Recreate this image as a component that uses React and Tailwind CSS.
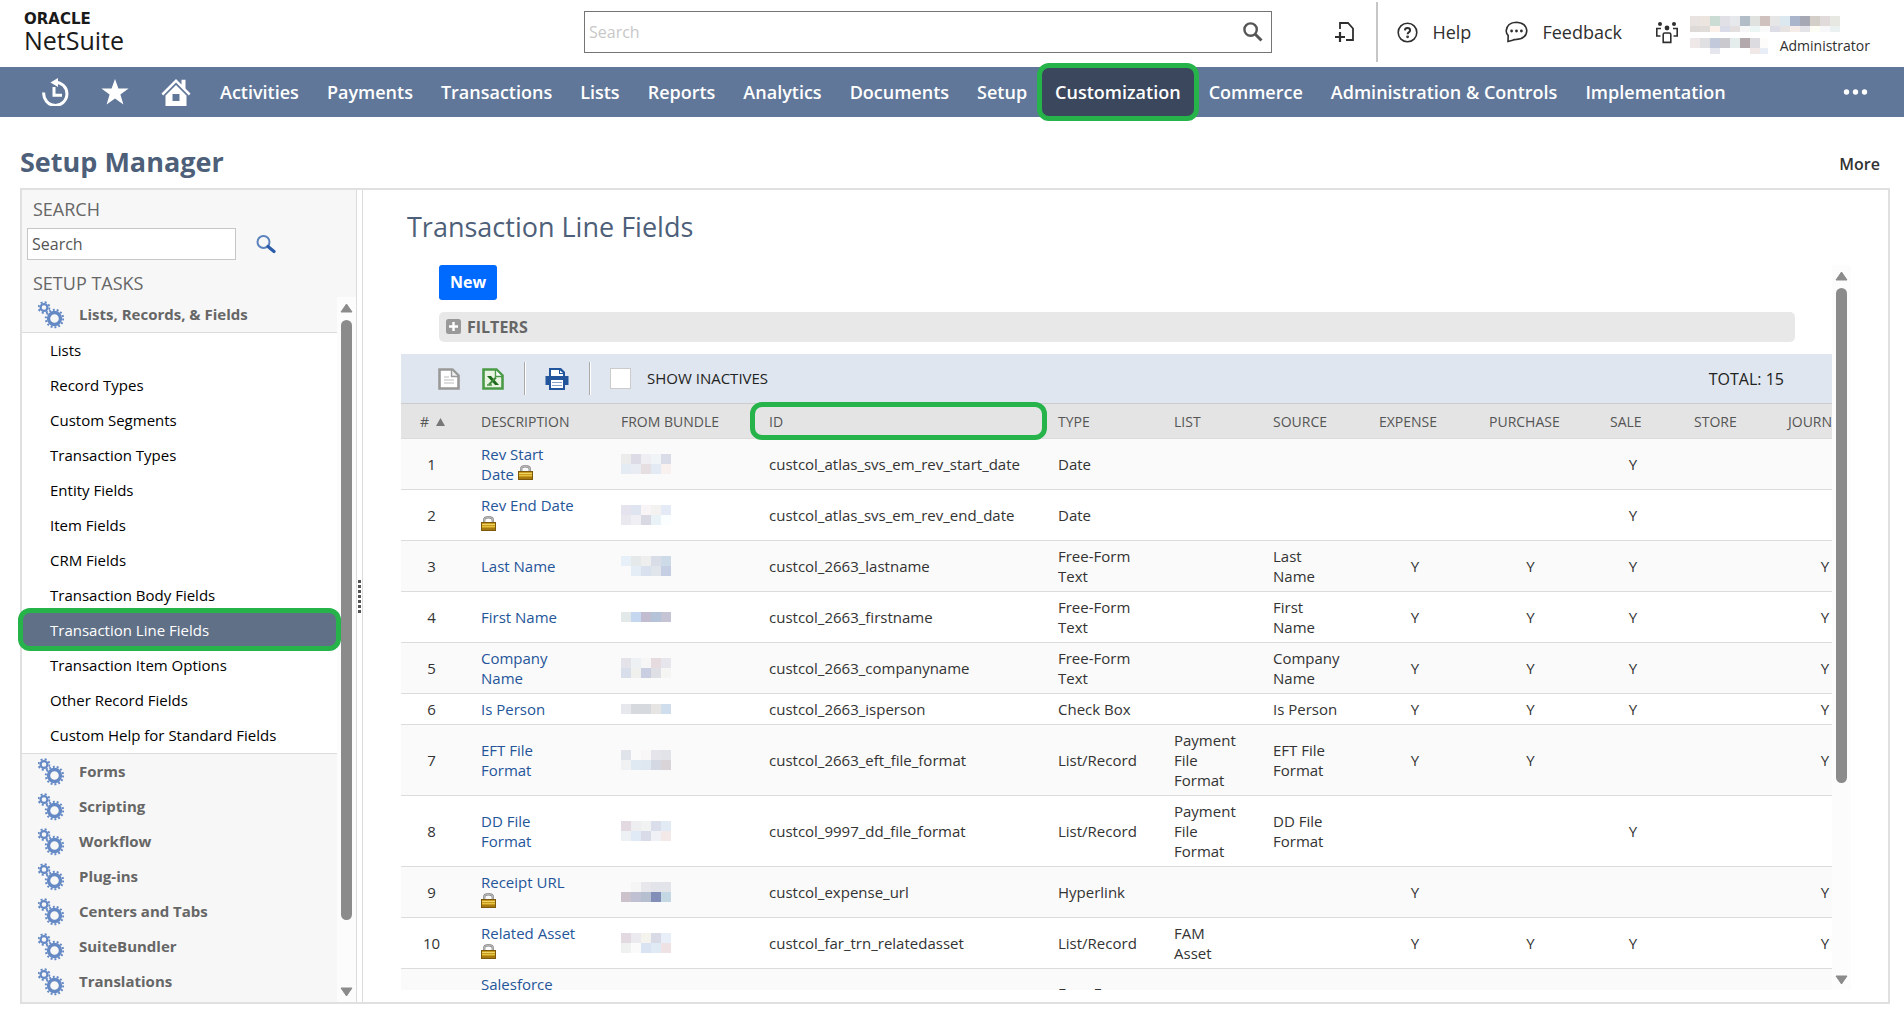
import React, { useState } from 'react';

const navItems = [
  'Activities',
  'Payments',
  'Transactions',
  'Lists',
  'Reports',
  'Analytics',
  'Documents',
  'Setup',
  'Customization',
  'Commerce',
  'Administration & Controls',
  'Implementation',
];

const taskLinks = [
  'Lists',
  'Record Types',
  'Custom Segments',
  'Transaction Types',
  'Entity Fields',
  'Item Fields',
  'CRM Fields',
  'Transaction Body Fields',
  'Transaction Line Fields',
  'Transaction Item Options',
  'Other Record Fields',
  'Custom Help for Standard Fields',
];

const taskGroups = [
  'Forms',
  'Scripting',
  'Workflow',
  'Plug-ins',
  'Centers and Tabs',
  'SuiteBundler',
  'Translations',
];

const rows = [
  {
    name: 'Rev Start Date', locked: true, id: 'custcol_atlas_svs_em_rev_start_date', type: 'Date', sale: 'Y',
    bundle: [['#ececec', '#dddbe6', '#eeeef3', '#f1f4f6', '#dadde8'], ['#e4ebf3', '#e9edf3', '#e6dfe1', '#e3eaf3', '#f9f0f0']],
  },
  {
    name: 'Rev End Date', locked: true, id: 'custcol_atlas_svs_em_rev_end_date', type: 'Date', sale: 'Y',
    bundle: [['#e5e4ee', '#dfe5f0', '#f9f5f6', '#f4f1f1', '#e4ebf6'], ['#e9e8ef', '#efeff4', '#d9d9e3', '#e9f3f7', '#fafefe']],
  },
  {
    name: 'Last Name', id: 'custcol_2663_lastname', type: 'Free-Form Text', source: 'Last Name', expense: 'Y', purchase: 'Y', sale: 'Y', journal: 'Y',
    bundle: [['#e7f0f9', '#e6e9e9', '#eeeeee', '#d9dde7', '#cddae8'], ['#fafafa', '#e4ecf6', '#d9e0ee', '#e0e5ec', '#c5cee2']],
  },
  {
    name: 'First Name', id: 'custcol_2663_firstname', type: 'Free-Form Text', source: 'First Name', expense: 'Y', purchase: 'Y', sale: 'Y', journal: 'Y',
    bundle: [['#e3e8e8', '#c5d7ee', '#c2bcd0', '#b5c3d9', '#c4c4d4']],
  },
  {
    name: 'Company Name', id: 'custcol_2663_companyname', type: 'Free-Form Text', source: 'Company Name', expense: 'Y', purchase: 'Y', sale: 'Y', journal: 'Y',
    bundle: [['#e4e3e9', '#edf1f4', '#f6f6f6', '#e6dcdf', '#e7e6ec'], ['#d8deea', '#f0f0ef', '#c9cfe1', '#dfdfe6', '#f5f5f4']],
  },
  {
    name: 'Is Person', id: 'custcol_2663_isperson', type: 'Check Box', source: 'Is Person', expense: 'Y', purchase: 'Y', sale: 'Y', journal: 'Y',
    bundle: [['#e6e8ee', '#d6d9de', '#d6d9de', '#e6e5e4', '#d0dded']],
  },
  {
    name: 'EFT File Format', id: 'custcol_2663_eft_file_format', type: 'List/Record', list: 'Payment File Format', source: 'EFT File Format', expense: 'Y', purchase: 'Y', journal: 'Y',
    bundle: [['#e1e3ea', '#fafafa', '#f9f6f7', '#e5e4ea', '#e2e3e9'], ['#eff1f3', '#dfe9f2', '#dfe8f1', '#d4d8e2', '#d8d4d8']],
  },
  {
    name: 'DD File Format', id: 'custcol_9997_dd_file_format', type: 'List/Record', list: 'Payment File Format', source: 'DD File Format', sale: 'Y',
    bundle: [['#e3dae1', '#eeedf0', '#f1f2f2', '#d9deea', '#e2eaf3'], ['#eef1f4', '#e0eaf7', '#d9dbe8', '#f0f1f6', '#f2e9e8']],
  },
  {
    name: 'Receipt URL', locked: true, id: 'custcol_expense_url', type: 'Hyperlink', expense: 'Y', journal: 'Y',
    bundle: [['#fafafa', '#f5f5f6', '#e7e7ec', '#e3e4ea', '#e3e4ea'], ['#ccc2cc', '#bfc1d3', '#b6bfd0', '#828db8', '#c3d8e3']],
  },
  {
    name: 'Related Asset', locked: true, id: 'custcol_far_trn_relatedasset', type: 'List/Record', list: 'FAM Asset', expense: 'Y', purchase: 'Y', sale: 'Y', journal: 'Y',
    bundle: [['#e3dae1', '#ebebef', '#f5f3ee', '#d8dae6', '#e8eff9'], ['#eff1f1', '#fafafa', '#d9e3f1', '#dfeaf5', '#efe2e4']],
  },
  { name: 'Salesforce', type: 'Free-Form Text', tall: true },
];

const accountName = [
  ['#e8e3e0', '#ece4df', '#cbdcd5', '#e0e0e6', '#e6e8ec', '#b3bdc8', '#dfe2de', '#cfc2be', '#e6e6e6', '#dbe8f0', '#aab4ca', '#a6a9b4', '#d3cfc8', '#e0dadb', '#e8e8e3'],
  ['#dddad8', '#dfdcda', '#fbf1ea', '#d9dce8', '#e3dfdf', '#f7f7f7', '#ebf6f5', '#fafafa', '#dcdde6', '#e6e3e2', '#f6ede9', '#e3e3e8', '#fefdf5', '#f8f8fb', '#eaf1f0'],
];

const accountRole = [
  ['#eee8e8', '#e0e0e2', '#c2c9db', '#c9c9ce', '#e5edec', '#b3a9ac', '#dcdce0', '#fdfcfb'],
  ['#ffffff', '#ffffff', '#e6e6ee', '#ffffff', '#ffffff', '#ffffff', '#efe8e6', '#e8edf6'],
];

// Redacted text, shown as coloured blocks
const Mosaic = ({ colors, cell = 10, lastRow = 10 }) => {
  const width = colors[0].length * cell;
  const height = (colors.length - 1) * cell + lastRow;

  return (
    <svg width={width} height={height} shapeRendering="crispEdges" aria-hidden="true" className="block">
      {colors.map((line, y) =>
        line.map((fill, x) => (
          <rect key={`${x}-${y}`} x={x * cell} y={y * cell} width={cell} height={cell} fill={fill} />
        ))
      )}
    </svg>
  );
};

const Gear = ({ cx, cy, r, teeth, ring, tooth }) => {
  const toothRadius = r + ring / 2 + tooth / 2;
  const step = (2 * Math.PI * toothRadius) / teeth;

  return (
    <g fill="none" stroke="#6489c5">
      <circle cx={cx} cy={cy} r={r} strokeWidth={ring} />
      <circle cx={cx} cy={cy} r={toothRadius} strokeWidth={tooth} strokeDasharray={`${step * 0.5} ${step * 0.5}`} />
    </g>
  );
};

const GearsIcon = () => (
  <svg width="26" height="28" viewBox="0 0 26 28" aria-hidden="true">
    <Gear cx={6} cy={6.5} r={3.4} teeth={8} ring={2.2} tooth={1.8} />
    <Gear cx={16.5} cy={17.5} r={6} teeth={14} ring={3.4} tooth={2} />
  </svg>
);

const LockIcon = () => (
  <svg width="15" height="15" viewBox="0 0 15 15" className="inline-block align-baseline" role="img" aria-label="Locked">
    <path d="M3.2 8V4.2Q3.2 1.2 7.5 1.2T11.8 4.2V8" fill="none" stroke="#8d8d8d" strokeWidth="2.4" />
    <path d="M3.2 7V4.2Q3.2 1.2 7.5 1.2T11.8 4.2V7" fill="none" stroke="#c9c9c9" strokeWidth="0.9" />
    <rect x="0.5" y="6.5" width="14" height="8" fill="#c89b1d" stroke="#7d5a0b" />
    <rect x="1" y="8" width="13" height="1" fill="#efd568" />
    <rect x="1" y="10" width="13" height="1" fill="#e6c443" />
    <rect x="1" y="12" width="13" height="2" fill="#a67a10" />
  </svg>
);

const ScrollBar = ({ thumb }) => (
  <div className="flex w-[19px] shrink-0 flex-col items-center bg-[#fcfcfc] pt-[6px] pb-[5px]">
    <svg width="13" height="10" viewBox="0 0 13 10" aria-hidden="true">
      <path d="M6.5 1L12 9H1Z" fill="#8b8b8b" stroke="#8b8b8b" strokeLinejoin="round" />
    </svg>
    <div className="mt-[7px] w-[11px] flex-1">
      <div className="w-full rounded-full bg-[#8b8b8b]" style={{ height: thumb }} />
    </div>
    <svg width="13" height="10" viewBox="0 0 13 10" aria-hidden="true">
      <path d="M6.5 9L12 1H1Z" fill="#8b8b8b" stroke="#8b8b8b" strokeLinejoin="round" />
    </svg>
  </div>
);

const Header = () => (
  <header className="flex h-[67px] items-start pr-[34px] pl-6 text-[#2f2f2f]">
    <div className="w-[560px] pt-[11px] text-[#1a1a1a]">
      <div className="font-['DejaVu_Sans',sans-serif] text-[15px] leading-[16px] font-bold">ORACLE</div>
      <div className="text-[25px] leading-[26px]">NetSuite</div>
    </div>

    <form className="mt-[11px] flex h-[42px] flex-1 items-center border border-[#757575]">
      <input
        type="text"
        aria-label="Global search"
        placeholder="Search"
        className="h-full min-w-0 flex-1 px-1 text-base outline-none placeholder:text-[#c8c8c8]"
      />
      <button type="button" aria-label="Search" className="px-2">
        <svg width="20" height="20" viewBox="0 0 20 20" fill="none" stroke="#555" strokeWidth="2.4" aria-hidden="true">
          <circle cx="7.6" cy="7.6" r="6.2" />
          <path d="M12 12L18.5 18.5" strokeWidth="3" />
        </svg>
      </button>
    </form>

    <button type="button" aria-label="Create new" className="mt-[21px] ml-[62px]">
      <svg width="22" height="22" viewBox="0 0 22 22" fill="none" stroke="#2f2f2f" strokeWidth="1.8" aria-hidden="true">
        <path d="M6 8V2H14L19 7.5V19H12" />
        <path d="M1 16H11M6 11V21" strokeWidth="2.2" />
      </svg>
    </button>
    <div className="mt-0.5 ml-[20px] h-[60px] w-0.5 bg-[#c6c6c6]" />

    <a href="#help" className="mt-[20px] ml-[19px] flex items-center gap-[14px] text-lg leading-6 font-medium">
      <svg width="21" height="21" viewBox="0 0 21 21" fill="none" stroke="#2f2f2f" strokeWidth="1.6" aria-hidden="true">
        <circle cx="10.5" cy="10.5" r="9.3" />
        <path d="M7.9 8.4Q8 6 10.5 6T13.1 8.2Q13.1 9.5 11.7 10.3Q10.6 11 10.6 12.2" strokeWidth="2" />
        <circle cx="10.6" cy="14.8" r="0.6" />
      </svg>
      Help
    </a>
    <a href="#feedback" className="mt-[20px] ml-[34px] flex items-center gap-[14px] text-lg leading-6 font-medium">
      <svg width="23" height="22" viewBox="0 0 23 22" fill="none" stroke="#2f2f2f" strokeWidth="1.6" aria-hidden="true">
        <path d="M3.2 14.5Q1 12 1.2 9.6Q2 1.6 11.5 1.2Q21 1.6 21.8 9.8Q21 18 11.5 18.4Q9 18.4 7.5 19.2L3 20.5Z" />
        <g fill="#2f2f2f" stroke="none">
          <circle cx="6.6" cy="10" r="1.4" />
          <circle cx="11.5" cy="10" r="1.4" />
          <circle cx="16.4" cy="10" r="1.4" />
        </g>
      </svg>
      Feedback
    </a>

    <button type="button" aria-label="Change role" className="mt-[21px] ml-[33px]">
      <svg width="24" height="23" viewBox="0 0 24 23" fill="none" stroke="#2f2f2f" strokeWidth="1.6" aria-hidden="true">
        <path d="M8.2 13.5Q8.2 12 9.7 12H14.3Q15.8 12 15.8 13.5V21.4H8.2Z" />
        <path d="M6 7.5H1.8V15H5.5M18 7.5H22.2V15H18.5" />
        <g fill="#2f2f2f" stroke="none">
          <circle cx="12" cy="7" r="2.4" />
          <circle cx="5" cy="3" r="2" />
          <circle cx="19" cy="3" r="2" />
        </g>
      </svg>
    </button>
    <div className="mt-[16px] ml-[11px] w-[180px]">
      <Mosaic colors={accountName} lastRow={6} />
      <div className="mt-1 flex items-center gap-3">
        <Mosaic colors={accountRole} lastRow={6} />
        <span className="text-sm leading-5">Administrator</span>
      </div>
    </div>
  </header>
);

const NavBar = () => (
  <nav className="flex h-[50px] items-center bg-[#607799] pr-9 pl-[42px] text-lg font-semibold text-white">
    <div className="flex items-center gap-8 pr-[15px]">
      <button type="button" aria-label="Recent records">
        <svg width="27" height="28" viewBox="0 0 27 28" fill="none" stroke="white" strokeWidth="3" aria-hidden="true">
          <path d="M1.8 14.5A11.6 11.6 0 1 0 13 4.2" />
          <path d="M8.5 4.5L16 0V9Z" fill="white" stroke="none" />
          <path d="M12 9V17.2H20" />
        </svg>
      </button>
      <button type="button" aria-label="Shortcuts">
        <svg width="28" height="26" viewBox="0 0 28 26" fill="white" aria-hidden="true">
          <path d="M14 0L17.4 9.6H27.6L19.4 15.6L22.4 25.6L14 19.6L5.6 25.6L8.6 15.6L0.4 9.6H10.6Z" />
        </svg>
      </button>
      <a href="#home" aria-label="Home">
        <svg width="30" height="27" viewBox="0 0 30 27" fill="white" aria-hidden="true">
          <path d="M15 0L20.5 5.5V0.8H24.5V9.5L29.5 14.5L27.8 16.4L15 3.6L2.2 16.4L0.5 14.5Z" />
          <path fillRule="evenodd" d="M15 6L25.5 16.5V27H4.5V16.5ZM11.5 15V22H18.5V15Z" />
        </svg>
      </a>
    </div>
    <ul className="flex h-full flex-1 items-stretch">
      {navItems.map((item) =>
        item === 'Customization' ? (
          <li key={item} className="relative flex items-center bg-[#3b475d] px-3.5">
            <a href="#nav" aria-current="page">{item}</a>
            <span className="pointer-events-none absolute -inset-1 rounded-xl border-5 border-[#25b34a]" />
          </li>
        ) : (
          <li key={item} className="flex items-center px-3.5 whitespace-nowrap">
            <a href="#nav">{item}</a>
          </li>
        )
      )}
    </ul>
    <button type="button" aria-label="More menus">
      <svg width="25" height="8" viewBox="0 0 25 8" fill="white" aria-hidden="true">
        <circle cx="3.5" cy="4" r="2.7" />
        <circle cx="12.5" cy="4" r="2.7" />
        <circle cx="21.5" cy="4" r="2.7" />
      </svg>
    </button>
  </nav>
);

const Sidebar = () => (
  <aside className="flex w-[334px] shrink-0 flex-col bg-[#f7f7f7] text-[15px]">
    <label htmlFor="task-search" className="mt-2 mb-2 ml-[11px] text-lg leading-[22px] text-[#666]">SEARCH</label>
    <div className="ml-[5px] flex items-center gap-5">
      <input
        id="task-search"
        type="text"
        placeholder="Search"
        className="h-8 w-[209px] border border-[#c6c6c6] bg-white px-1 text-base outline-none placeholder:text-[#555]"
      />
      <button type="button" aria-label="Search tasks">
        <svg width="20" height="20" viewBox="0 0 20 20" fill="none" aria-hidden="true">
          <circle cx="7.5" cy="8" r="6" stroke="#5b82bd" strokeWidth="2" />
          <path d="M12 12.5L18 17.5" stroke="#2a5caa" strokeWidth="3.2" strokeLinecap="round" />
        </svg>
      </button>
    </div>
    <h2 className="mt-3 mb-[3px] ml-[11px] text-lg leading-[22px] text-[#666]">SETUP TASKS</h2>

    <div className="flex min-h-0 flex-1">
      <div className="flex-1 overflow-x-visible overflow-y-clip">
        <a href="#tasks" className="flex h-9 items-center gap-[15px] border-b border-[#dcdcdc] pl-4 font-bold text-[#666]">
          <GearsIcon />
          Lists, Records, & Fields
        </a>
        <ul className="border-b border-[#dcdcdc] bg-white text-black">
          {taskLinks.map((link) =>
            link === 'Transaction Line Fields' ? (
              <li key={link} className="relative bg-[#607087] pl-7 leading-[35px] text-white">
                <a href="#tasks" aria-current="page">{link}</a>
                <span className="pointer-events-none absolute -inset-x-1 -top-[5px] -bottom-[3px] rounded-xl border-5 border-[#25b34a]" />
              </li>
            ) : (
              <li key={link} className="pl-7 leading-[35px]">
                <a href="#tasks">{link}</a>
              </li>
            )
          )}
        </ul>
        <ul className="font-bold text-[#666]">
          {taskGroups.map((group) => (
            <li key={group}>
              <a href="#tasks" className="flex h-[35px] items-center gap-[15px] pl-4">
                <GearsIcon />
                {group}
              </a>
            </li>
          ))}
        </ul>
      </div>
      <ScrollBar thumb="90%" />
    </div>
  </aside>
);

const Toolbar = ({ showInactives, onToggle }) => (
  <div className="flex h-[50px] items-center border-b border-[#ccc] bg-[#dfe6ef] pr-12 pl-[37px] text-[#222]">
    <button type="button" aria-label="Export as CSV">
      <svg width="22" height="22" viewBox="0 0 22 22" aria-hidden="true">
        <path d="M1.5 1.5H14.5L20.5 7.5V20.5H1.5Z" fill="white" stroke="#999" strokeWidth="2.6" />
        <path d="M13.5 2V8.5H20" fill="#eee" stroke="#999" strokeWidth="1.4" />
        <path d="M6 9H11M6 12H16M6 15H16" stroke="#bbb" />
      </svg>
    </button>
    <button type="button" aria-label="Export to Excel" className="ml-[22px]">
      <svg width="22" height="22" viewBox="0 0 22 22" aria-hidden="true">
        <path d="M1.5 1.5H14.5L20.5 7.5V20.5H1.5Z" fill="#eaf4e2" stroke="#4b9a48" strokeWidth="2.6" />
        <path d="M13.5 2V8.5H20" fill="white" stroke="#4b9a48" strokeWidth="1.4" />
        <path d="M5 8H9L17 17H13Z" fill="#1e6b1c" />
        <path d="M14 9.5L7 16.5" stroke="#3d8a38" strokeWidth="2" />
        <path d="M5 17H10" stroke="#3d8a38" strokeWidth="1.4" />
      </svg>
    </button>
    <div className="ml-5 h-[33px] w-0.5 border-r border-l border-r-white border-l-[#aaa]" />
    <button type="button" aria-label="Print" className="ml-[19px]">
      <svg width="24" height="22" viewBox="0 0 24 22" aria-hidden="true">
        <path d="M0.5 8H4V0H16L20 4V8H23.5V17H20V22H4V17H0.5Z" fill="#22559c" />
        <path d="M6 2H14V6H18V8H6Z" fill="white" />
        <path d="M15 2.5L18 5H15Z" fill="white" />
        <rect x="6" y="12" width="12" height="8" fill="white" />
        <path d="M7 14.5H17M7 17.5H17" stroke="#8aa3cc" />
      </svg>
    </button>
    <div className="ml-5 h-[33px] w-0.5 border-r border-l border-r-white border-l-[#aaa]" />
    <label className="ml-[19px] flex items-center gap-4 text-[15px]">
      <input
        type="checkbox"
        checked={showInactives}
        onChange={onToggle}
        className="h-[21px] w-[21px] appearance-none border border-[#ccc] bg-white checked:bg-[#607799]"
      />
      SHOW INACTIVES
    </label>
    <span className="ml-auto text-base">TOTAL: 15</span>
  </div>
);

const FieldsTable = () => (
  <table className="w-[1480px] table-fixed border-separate border-spacing-0 text-[15px] leading-5 text-[#333]">
    <colgroup>
      <col className="w-[61px]" />
      <col className="w-[140px]" />
      <col className="w-[148px]" />
      <col className="w-[289px]" />
      <col className="w-[116px]" />
      <col className="w-[99px]" />
      <col className="w-[106px]" />
      <col className="w-[110px]" />
      <col className="w-[121px]" />
      <col className="w-[84px]" />
      <col className="w-[94px]" />
      <col className="w-[112px]" />
    </colgroup>
    <thead>
      <tr className="bg-[#e4e4e4] text-sm text-[#555] [&>th]:h-[35px] [&>th]:border-b [&>th]:border-[#dcdcdc] [&>th]:pt-0.5 [&>th]:pl-[19px] [&>th]:text-left [&>th]:font-normal">
        <th>
          <span className="flex items-center gap-[7px]">
            #
            <svg width="9" height="8" viewBox="0 0 9 8" aria-hidden="true">
              <path d="M4.5 0L9 8H0Z" fill="#777" />
            </svg>
          </span>
        </th>
        <th>DESCRIPTION</th>
        <th>FROM BUNDLE</th>
        <th className="relative">
          ID
          <span className="pointer-events-none absolute -top-0.5 -right-2 -bottom-0.5 left-0 rounded-xl border-5 border-[#25b34a]" />
        </th>
        <th>TYPE</th>
        <th>LIST</th>
        <th>SOURCE</th>
        <th>EXPENSE</th>
        <th>PURCHASE</th>
        <th>SALE</th>
        <th>STORE</th>
        <th>JOURNAL</th>
      </tr>
    </thead>
    <tbody>
      {rows.map((row, i) => (
        <tr
          key={row.name}
          className="odd:bg-[#fafafa] [&>td]:border-b [&>td]:border-[#dcdcdc] [&>td]:py-[5px] [&>td:nth-child(n+8)]:text-center"
        >
          <td className="text-center">{row.tall ? '' : i + 1}</td>
          <td className={row.tall ? 'h-[69px] pr-6 pl-[19px] align-top' : 'pr-6 pl-[19px]'}>
            <a href="#field" className="text-[#255599]">{row.name}</a>
            {row.locked && <> <LockIcon /></>}
          </td>
          <td className="pl-[19px]">{row.bundle && <Mosaic colors={row.bundle} />}</td>
          <td className="pl-[19px]">{row.id}</td>
          <td className="pr-[18px] pl-[19px]">{row.type}</td>
          <td className="pr-[18px] pl-[19px]">{row.list}</td>
          <td className="pr-[18px] pl-[19px]">{row.source}</td>
          <td>{row.expense}</td>
          <td>{row.purchase}</td>
          <td>{row.sale}</td>
          <td></td>
          <td>{row.journal}</td>
        </tr>
      ))}
    </tbody>
  </table>
);

const App = () => {
  const [showInactives, setShowInactives] = useState(false);

  return (
    <div className="min-h-screen bg-white font-['Open_Sans','Noto_Sans',sans-serif]">
      <Header />
      <NavBar />

      <div className="flex h-[71px] items-end justify-between pr-6 pl-5">
        <h1 className="text-[27px] leading-[52px] font-bold text-[#4d5f79]">Setup Manager</h1>
        <a href="#more" className="text-base leading-[47px] font-semibold text-[#333]">More</a>
      </div>

      <main className="mr-3.5 ml-5 flex h-[calc(100vh-209px)] border-2 border-[#e0e0e0]">
        <Sidebar />
        <div className="flex w-[7px] shrink-0 flex-col items-center justify-center border-r border-l border-[#dcdcdc]">
          <svg width="3" height="33" viewBox="0 0 3 33" aria-hidden="true">
            <path d="M1.5 0V33" stroke="#555" strokeWidth="3" strokeDasharray="3 2" />
          </svg>
        </div>

        <section className="flex min-w-0 flex-1 flex-col pr-[37px] pb-3 pl-[38px]">
          <h2 className="pt-[17px] pl-1.5 text-[27px] leading-10 text-[#4d5f79]">Transaction Line Fields</h2>
          <div className="mt-[18px] flex min-h-0 flex-1">
            <div className="min-w-0 flex-1 overflow-hidden">
              <button type="button" className="ml-[38px] h-[35px] rounded-[3px] bg-[#006aff] px-[11px] pb-0.5 text-base font-bold text-white">
                New
              </button>
              <button
                type="button"
                className="mt-3 mr-[37px] ml-[38px] flex h-[30px] w-[calc(100%-75px)] items-center gap-1.5 rounded-[5px] bg-[#e8e8e8] px-[7px] pb-px text-base font-bold text-[#666]"
              >
                <svg width="15" height="15" viewBox="0 0 15 15" aria-hidden="true">
                  <rect width="15" height="15" rx="2.5" fill="#999" />
                  <path d="M7.5 3V12M3 7.5H12" stroke="white" strokeWidth="2.4" />
                </svg>
                FILTERS
              </button>
              <div className="mt-3">
                <Toolbar showInactives={showInactives} onToggle={() => setShowInactives(!showInactives)} />
                <FieldsTable />
              </div>
            </div>
            <ScrollBar thumb="72%" />
          </div>
        </section>
      </main>
    </div>
  );
};

export default App;
